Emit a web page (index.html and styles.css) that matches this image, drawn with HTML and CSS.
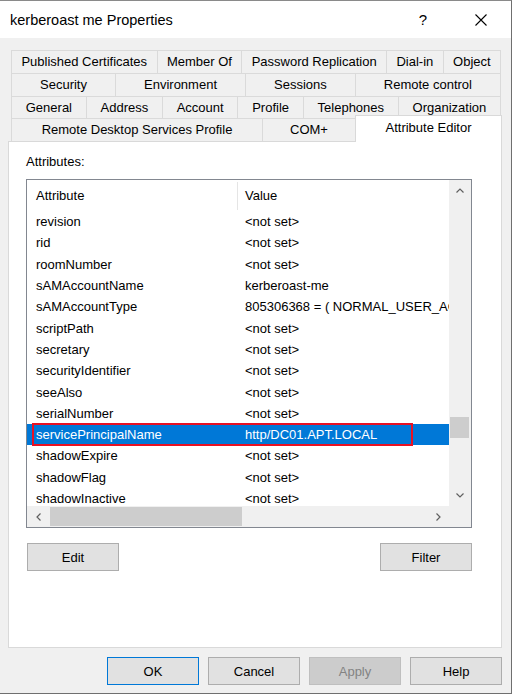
FILE: index.html
```html
<!DOCTYPE html>
<html lang="en">
<head>
    <meta charset="UTF-8">
    <title>kerberoast me Properties</title>
    <link rel="stylesheet" href="styles.css">
</head>
<body>
    <div class="window">
        <!-- Title bar -->
        <div class="titlebar">
            <span class="title">kerberoast me Properties</span>
            <span class="tb-btn tb-help">?</span>
            <span class="tb-btn tb-close">
                <svg width="12" height="12" viewBox="0 0 12 12"><path d="M0.5 0.5 L11.5 11.5 M11.5 0.5 L0.5 11.5" stroke="#000" stroke-width="1.1"/></svg>
            </span>
        </div>

        <div class="client">
            <!-- Tabs -->
            <div class="tabs">
                <div class="tab-row">
                    <span class="tab">Published Certificates</span>
                    <span class="tab">Member Of</span>
                    <span class="tab">Password Replication</span>
                    <span class="tab">Dial-in</span>
                    <span class="tab">Object</span>
                </div>
                <div class="tab-row">
                    <span class="tab">Security</span>
                    <span class="tab">Environment</span>
                    <span class="tab">Sessions</span>
                    <span class="tab">Remote control</span>
                </div>
                <div class="tab-row">
                    <span class="tab">General</span>
                    <span class="tab">Address</span>
                    <span class="tab">Account</span>
                    <span class="tab">Profile</span>
                    <span class="tab">Telephones</span>
                    <span class="tab">Organization</span>
                </div>
                <div class="tab-row">
                    <span class="tab rdsp">Remote Desktop Services Profile</span>
                    <span class="tab">COM+</span>
                    <span class="tab active">Attribute Editor</span>
                </div>
            </div>

            <!-- Attribute Editor page -->
            <div class="panel">
                <div class="label">Attributes:</div>
                <div class="listbox">
                    <div class="list">
                        <div class="list-head">
                            <span class="col-attr">Attribute</span>
                            <span class="col-val">Value</span>
                        </div>
                        <div class="row"><span class="col-attr">revision</span><span class="col-val">&lt;not set&gt;</span></div>
                        <div class="row"><span class="col-attr">rid</span><span class="col-val">&lt;not set&gt;</span></div>
                        <div class="row"><span class="col-attr">roomNumber</span><span class="col-val">&lt;not set&gt;</span></div>
                        <div class="row"><span class="col-attr">sAMAccountName</span><span class="col-val">kerberoast-me</span></div>
                        <div class="row"><span class="col-attr">sAMAccountType</span><span class="col-val">805306368 = ( NORMAL_USER_ACCOUNT )</span></div>
                        <div class="row"><span class="col-attr">scriptPath</span><span class="col-val">&lt;not set&gt;</span></div>
                        <div class="row"><span class="col-attr">secretary</span><span class="col-val">&lt;not set&gt;</span></div>
                        <div class="row"><span class="col-attr">securityIdentifier</span><span class="col-val">&lt;not set&gt;</span></div>
                        <div class="row"><span class="col-attr">seeAlso</span><span class="col-val">&lt;not set&gt;</span></div>
                        <div class="row"><span class="col-attr">serialNumber</span><span class="col-val">&lt;not set&gt;</span></div>
                        <div class="row selected"><span class="col-attr">servicePrincipalName</span><span class="col-val">http/DC01.APT.LOCAL</span></div>
                        <div class="row"><span class="col-attr">shadowExpire</span><span class="col-val">&lt;not set&gt;</span></div>
                        <div class="row"><span class="col-attr">shadowFlag</span><span class="col-val">&lt;not set&gt;</span></div>
                        <div class="row"><span class="col-attr">shadowInactive</span><span class="col-val">&lt;not set&gt;</span></div>
                    </div>
                    <div class="vscroll">
                        <span class="arrow"><svg width="8" height="5" viewBox="0 0 8 5"><polyline points="0.5,4.5 4,1 7.5,4.5" fill="none" stroke="#606060" stroke-width="1.2"/></svg></span>
                        <div class="track"><div class="thumb"></div></div>
                        <span class="arrow"><svg width="8" height="5" viewBox="0 0 8 5"><polyline points="0.5,0.5 4,4 7.5,0.5" fill="none" stroke="#606060" stroke-width="1.2"/></svg></span>
                    </div>
                    <div class="hscroll">
                        <span class="arrow"><svg width="5" height="8" viewBox="0 0 5 8"><polyline points="4.5,0.5 1,4 4.5,7.5" fill="none" stroke="#606060" stroke-width="1.2"/></svg></span>
                        <div class="track"><div class="thumb"></div></div>
                        <span class="arrow"><svg width="5" height="8" viewBox="0 0 5 8"><polyline points="0.5,0.5 4,4 0.5,7.5" fill="none" stroke="#606060" stroke-width="1.2"/></svg></span>
                    </div>
                    <div class="corner"></div>
                </div>
                <div class="panel-buttons">
                    <button class="btn">Edit</button>
                    <button class="btn">Filter</button>
                </div>
            </div>

            <!-- Dialog buttons -->
            <div class="dialog-buttons">
                <button class="btn default">OK</button>
                <button class="btn">Cancel</button>
                <button class="btn" disabled>Apply</button>
                <button class="btn">Help</button>
            </div>
        </div>
    </div>
</body>
</html>
```

FILE: styles.css
```css
body {
    margin: 0;
    background: #fff;
    font-family: "Liberation Sans", Arial, sans-serif;
    font-size: 13px;
    color: #000;
}
.window {
    width: 512px;
    height: 694px;
    box-sizing: border-box;
    border-top: 1px solid #8a8a8a;
    border-right: 1px solid #6f6f6f;
    border-bottom: 1px solid #6f6f6f;
    display: flex;
    flex-direction: column;
}
.titlebar {
    height: 37px;
    flex: none;
    background: #fff;
    display: flex;
    align-items: center;
    padding: 0 20px 0 10px;
}
.title {
    flex: 1;
    font-size: 14.5px;
}
.tb-btn {
    width: 20px;
    display: flex;
    justify-content: center;
}
.tb-help {
    font-size: 15px;
}
.tb-close {
    margin-left: 38px;
}
.client {
    flex: 1;
    background: #f0f0f0;
    padding: 12px 10px 0 11px;
}
.tab-row {
    display: flex;
    height: 22.75px;
}
.tab {
    flex: 1 1 auto;
    text-align: center;
    line-height: 22px;
    white-space: nowrap;
    border-top: 1px solid #dadada;
    border-left: 1px solid #dadada;
}
.tab:last-child {
    border-right: 1px solid #dadada;
}
.tab.rdsp {
    flex: none;
    width: 251px;
    box-sizing: border-box;
}
.tab.active {
    flex: none;
    width: 147px;
    box-sizing: border-box;
    position: relative;
    z-index: 1;
    background: #fff;
    margin: -3px -1px -1px 0;
    line-height: 24px;
    border-color: #d9d9d9;
}
.panel {
    margin-left: -3px;
    width: 494px;
    height: 507px;
    box-sizing: border-box;
    background: #fff;
    border: 1px solid #d9d9d9;
    padding: 12px 0 0 17px;
}
.label {
    line-height: 16px;
    margin-bottom: 9px;
}
.listbox {
    width: 446px;
    height: 349px;
    box-sizing: border-box;
    border: 1px solid #828790;
    display: grid;
    grid-template-columns: 1fr 22px;
    grid-template-rows: 1fr 21px;
}
.list {
    overflow: hidden;
}
.list-head {
    display: flex;
    height: 31px;
    align-items: center;
}
.list-head .col-attr {
    height: 28px;
    line-height: 28px;
    border-right: 1px solid #e5e5e5;
}
.col-attr {
    flex: none;
    width: 211px;
    box-sizing: border-box;
    padding-left: 9px;
}
.col-val {
    padding-left: 7px;
    white-space: nowrap;
}
.row {
    display: flex;
    height: 21.3px;
    align-items: center;
    white-space: nowrap;
}
.row.selected {
    position: relative;
    background: #0078d7;
    color: #fff;
}
.row.selected::after {
    content: "";
    position: absolute;
    left: 5px;
    top: -1px;
    bottom: -1px;
    width: 381px;
    box-sizing: border-box;
    border: 2px solid #e81123;
}
.vscroll,
.hscroll,
.corner {
    background: #f0f0f0;
}
.vscroll {
    display: flex;
    flex-direction: column;
}
.hscroll {
    display: flex;
}
.arrow {
    flex: none;
    width: 22px;
    height: 21px;
    display: flex;
    align-items: center;
    justify-content: center;
}
.track {
    flex: 1;
}
.vscroll .thumb {
    margin: 216px 2px 0 1px;
    height: 21px;
    background: #cdcdcd;
}
.hscroll .thumb {
    margin: 1px 0 1px 1px;
    width: 192px;
    height: 19px;
    background: #cdcdcd;
}
.panel-buttons {
    width: 446px;
    display: flex;
    justify-content: space-between;
    margin-top: 15px;
    padding-left: 1px;
    box-sizing: border-box;
}
.btn {
    width: 92px;
    height: 28px;
    box-sizing: border-box;
    background: #e1e1e1;
    border: 1px solid #adadad;
    font-family: inherit;
    font-size: 13px;
    color: #000;
    padding: 0;
}
.btn.default {
    border-color: #0078d7;
}
.btn:disabled {
    background: #cccccc;
    border-color: #bfbfbf;
    color: #838383;
}
.dialog-buttons {
    display: flex;
    justify-content: flex-end;
    gap: 9px;
    margin: 9px -1px 0 0;
}
```
